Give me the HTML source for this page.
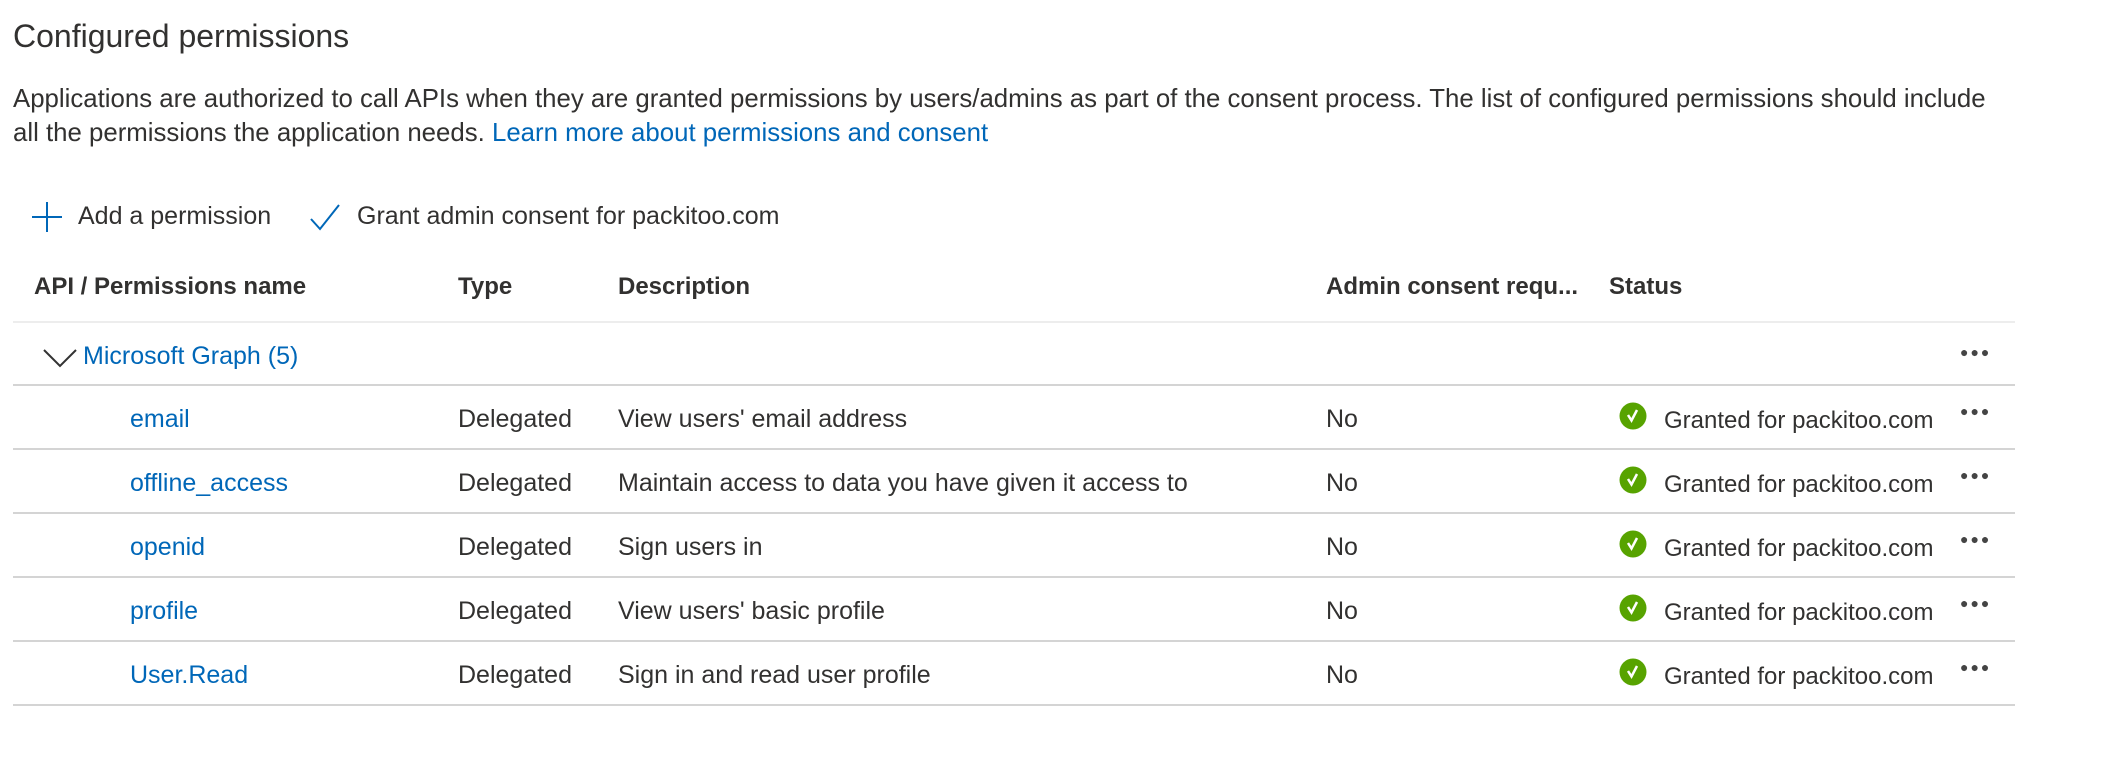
<!DOCTYPE html>
<html><head><meta charset="utf-8"><style>
body{margin:0;width:2120px;height:764px;background:#fff;font-family:"Liberation Sans",sans-serif;color:#323130;position:relative;overflow:hidden}
.a{position:absolute;white-space:nowrap}
.t{font-size:25px;line-height:28px}
.link{color:#0067b8}
.h{font-weight:bold;font-size:24px;line-height:28px;color:#323130}
.line{position:absolute;left:13px;width:2002px;height:2px;background:#d4d4d4}
.dots{position:absolute;font-size:14px;letter-spacing:2px;color:#444}
</style></head><body>
<div class="a" style="left:13px;top:18px;font-size:32px">Configured permissions</div>
<div class="a t" style="left:13px;top:85px;font-size:25.8px">Applications are authorized to call APIs when they are granted permissions by users/admins as part of the consent process. The list of configured permissions should include</div>
<div class="a t" style="left:13px;top:119px;font-size:25.8px">all the permissions the application needs. <span class="link">Learn more about permissions and consent</span></div>
<svg class="a" style="left:31px;top:201px" width="32" height="32"><path d="M16 1V31M1 16H31" stroke="#0067b8" stroke-width="2"/></svg>
<div class="a t" style="left:78px;top:202px">Add a permission</div>
<svg class="a" style="left:309px;top:203px" width="32" height="28"><path d="M2 16L11 26L30 2" stroke="#0067b8" stroke-width="2" fill="none"/></svg>
<div class="a t" style="left:357px;top:202px">Grant admin consent for packitoo.com</div>
<div class="a h" style="left:34px;top:273px">API / Permissions name</div>
<div class="a h" style="left:458px;top:273px">Type</div>
<div class="a h" style="left:618px;top:273px">Description</div>
<div class="a h" style="left:1326px;top:273px">Admin consent requ...</div>
<div class="a h" style="left:1609px;top:273px">Status</div>
<div class="line" style="top:321px;background:#ededed"></div>
<svg class="a" style="left:43px;top:348px" width="34" height="20"><path d="M1 2L17 18L33 2" stroke="#333" stroke-width="2" fill="none"/></svg>
<div class="a t link" style="left:83px;top:342px">Microsoft Graph (5)</div>
<div class="dots" style="left:1960px;top:344px">●●●</div>
<div class="line" style="top:384px"></div>

<div class="a t link" style="left:130px;top:405px">email</div>
<div class="a t" style="left:458px;top:405px">Delegated</div>
<div class="a t" style="left:618px;top:405px">View users' email address</div>
<div class="a t" style="left:1326px;top:405px">No</div>
<div class="line" style="top:448px"></div>

<div class="a t link" style="left:130px;top:469px">offline_access</div>
<div class="a t" style="left:458px;top:469px">Delegated</div>
<div class="a t" style="left:618px;top:469px">Maintain access to data you have given it access to</div>
<div class="a t" style="left:1326px;top:469px">No</div>
<div class="line" style="top:512px"></div>

<div class="a t link" style="left:130px;top:533px">openid</div>
<div class="a t" style="left:458px;top:533px">Delegated</div>
<div class="a t" style="left:618px;top:533px">Sign users in</div>
<div class="a t" style="left:1326px;top:533px">No</div>
<div class="line" style="top:576px"></div>

<div class="a t link" style="left:130px;top:597px">profile</div>
<div class="a t" style="left:458px;top:597px">Delegated</div>
<div class="a t" style="left:618px;top:597px">View users' basic profile</div>
<div class="a t" style="left:1326px;top:597px">No</div>
<div class="line" style="top:640px"></div>

<div class="a t link" style="left:130px;top:661px">User.Read</div>
<div class="a t" style="left:458px;top:661px">Delegated</div>
<div class="a t" style="left:618px;top:661px">Sign in and read user profile</div>
<div class="a t" style="left:1326px;top:661px">No</div>
<div class="line" style="top:704px"></div>

<div id="st"></div>
<script>
var ys=[419,483,547,611,675],h='';
ys.forEach(function(y){
h+='<svg class="a" style="left:1619px;top:'+(y-17)+'px" width="28" height="28"><circle cx="14" cy="14" r="13.5" fill="#57a300"/><path d="M9 13L12.5 18.5L18 8" stroke="#fff" stroke-width="2.5" fill="none"/></svg>';
h+='<div class="a t" style="left:1664px;top:'+(y-12)+'px;font-size:24px">Granted for packitoo.com</div>';
h+='<div class="dots" style="left:1960px;top:'+(y-16)+'px">●●●</div>';
});
document.getElementById('st').innerHTML=h;
</script>
</body></html>
